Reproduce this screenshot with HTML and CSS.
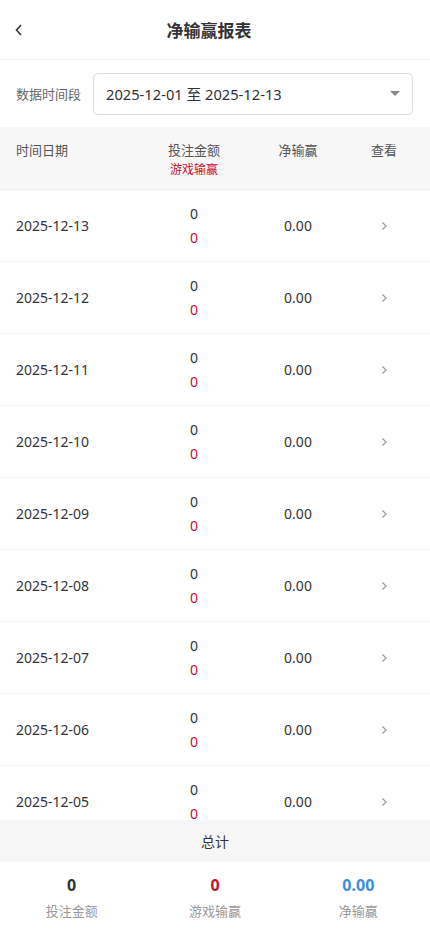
FILE: index.html
```html
<!DOCTYPE html>
<html lang="zh-CN">
<head>
  <meta charset="UTF-8">
  <meta name="viewport" content="width=device-width, initial-scale=1.0">
  <title>净输赢报表</title>
  <link rel="stylesheet" href="styles.css">
</head>
<body>
  <div class="page">
    <header class="nav">
      <span class="back">
        <svg width="10" height="14" viewBox="0 0 10 14"><path d="M7 2 L2.5 7 L7 12" fill="none" stroke="#333" stroke-width="1.6"/></svg>
      </span>
      <h1>净输赢报表</h1>
    </header>

    <div class="filter">
      <label>数据时间段</label>
      <div class="select">
        <span>2025-12-01 至 2025-12-13</span>
        <i class="caret"></i>
      </div>
    </div>

    <div class="thead">
      <div class="c1">时间日期</div>
      <div class="c2">投注金额<span class="red small">游戏输赢</span></div>
      <div class="c3">净输赢</div>
      <div class="c4">查看</div>
    </div>

    <div class="list" id="list"></div>

    <div class="total">
      <div class="total-title">总计</div>
      <div class="total-row">
        <div class="cell"><b>0</b><span>投注金额</span></div>
        <div class="cell"><b class="red">0</b><span>游戏输赢</span></div>
        <div class="cell"><b class="blue">0.00</b><span>净输赢</span></div>
      </div>
    </div>
  </div>

  <script>
    const list = document.getElementById('list');
    let html = '';
    for (let d = 13; d >= 5; d--) {
      const day = d < 10 ? '0' + d : d;
      html += `<div class="row">
        <div class="c1">2025-12-${day}</div>
        <div class="c2"><span>0</span><span class="red">0</span></div>
        <div class="c3">0.00</div>
        <div class="c4"><svg width="7" height="10" viewBox="0 0 7 10"><path d="M1.5 1.5 L5 5 L1.5 8.5" fill="none" stroke="#999" stroke-width="1.2"/></svg></div>
      </div>`;
    }
    list.innerHTML = html;
  </script>
</body>
</html>
```

FILE: styles.css
```css
* {
  box-sizing: border-box;
}

body {
  margin: 0;
  font-family: "Noto Sans", "Noto Sans CJK SC", sans-serif;
  color: #333;
  background: #fff;
}

.page {
  height: 100vh;
  display: flex;
  flex-direction: column;
  overflow: hidden;
}

.nav {
  height: 60px;
  flex-shrink: 0;
  display: flex;
  align-items: center;
  justify-content: center;
  padding-right: 12px;
  border-bottom: 1px solid #eee;
  position: relative;
}

.nav h1 {
  margin: 0;
  font-size: 17px;
  font-weight: 700;
  color: #333;
}

.back {
  position: absolute;
  left: 14px;
  top: 23px;
  display: flex;
}

.filter {
  height: 67px;
  flex-shrink: 0;
  display: flex;
  align-items: center;
  padding: 0 17px 0 16px;
  gap: 12px;
}

.filter label {
  font-size: 13px;
  color: #666;
}

.select {
  flex: 1;
  height: 42px;
  border: 1px solid #ddd;
  border-radius: 5px;
  display: flex;
  align-items: center;
  justify-content: space-between;
  padding: 0 12px 0 12px;
  font-size: 14.7px;
  color: #333;
}

.caret {
  width: 0;
  height: 0;
  border-left: 5px solid transparent;
  border-right: 5px solid transparent;
  border-top: 5px solid #888;
}

.thead,
.row {
  display: grid;
  grid-template-columns: 130px 96px 112px 60px;
  padding-left: 16px;
  font-size: 13px;
}

.thead {
  height: 63px;
  flex-shrink: 0;
  background: #f8f7f8;
  color: #555;
  padding-top: 14px;
  border-bottom: 1px solid #f0f0f0;
}

.thead .c2 {
  display: flex;
  flex-direction: column;
  align-items: center;
  line-height: 19px;
}

.thead .c1,
.thead .c3,
.thead .c4 {
  line-height: 19px;
}

.small {
  font-size: 12px;
}

.c2, .c3, .c4 {
  text-align: center;
}

.red {
  color: #c8102e;
}

.blue {
  color: #3a8ee6;
}

.list {
  flex: 1;
  overflow: hidden;
}

.row {
  height: 72px;
  flex-shrink: 0;
  align-items: center;
  font-size: 14px;
  border-bottom: 1px solid #f2f2f2;
}

.row .c2 {
  display: flex;
  flex-direction: column;
  align-items: center;
  line-height: 24px;
}

.row .c4 {
  display: flex;
  justify-content: center;
}

.total {
  flex-shrink: 0;
}

.total-title {
  height: 42px;
  display: flex;
  align-items: center;
  justify-content: center;
  background: #f6f6f6;
  font-size: 14px;
  color: #333;
}

.total-row {
  height: 70px;
  display: grid;
  grid-template-columns: 1fr 1fr 1fr;
  padding-top: 12px;
}

.cell {
  display: flex;
  flex-direction: column;
  align-items: center;
}

.cell b {
  font-size: 16px;
  line-height: 22px;
}

.cell span {
  font-size: 13px;
  color: #999;
  margin-top: 5px;
}
```
